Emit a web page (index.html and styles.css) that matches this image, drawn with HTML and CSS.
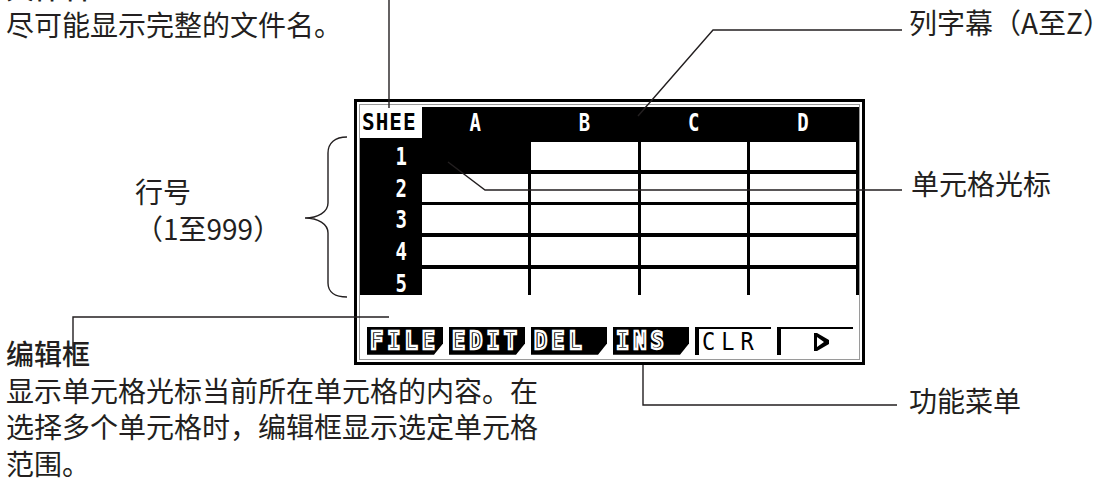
FILE: index.html
```html
<!DOCTYPE html>
<html lang="zh-CN">
<head>
  <meta charset="UTF-8">
  <title>电子表格画面</title>
  <link rel="stylesheet" href="styles.css">
</head>
<body>

<div class="figure">
  <div class="screen">
    <div class="lcd">
      <div class="sheet">
        <div class="corner"><span class="px">SHEE</span></div>
        <div class="col-head"><span class="px">A</span></div>
        <div class="col-head"><span class="px">B</span></div>
        <div class="col-head"><span class="px">C</span></div>
        <div class="col-head"><span class="px">D</span></div>

        <div class="row-no"><span class="px">1</span></div>
        <div class="cell cursor"></div>
        <div class="cell"></div>
        <div class="cell"></div>
        <div class="cell"></div>

        <div class="row-no"><span class="px">2</span></div>
        <div class="cell"></div>
        <div class="cell"></div>
        <div class="cell"></div>
        <div class="cell"></div>

        <div class="row-no"><span class="px">3</span></div>
        <div class="cell"></div>
        <div class="cell"></div>
        <div class="cell"></div>
        <div class="cell"></div>

        <div class="row-no"><span class="px">4</span></div>
        <div class="cell"></div>
        <div class="cell"></div>
        <div class="cell"></div>
        <div class="cell"></div>

        <div class="row-no"><span class="px">5</span></div>
        <div class="cell"></div>
        <div class="cell"></div>
        <div class="cell"></div>
        <div class="cell"></div>
      </div>

      <!-- 编辑框 -->
      <div class="edit-line"></div>

      <div class="fkeys">
        <span class="fkey"><span class="px">FILE</span></span>
        <span class="fkey"><span class="px">EDIT</span></span>
        <span class="fkey"><span class="px">DEL</span></span>
        <span class="fkey"><span class="px">INS</span></span>
        <span class="fkey open"><span class="px">CLR</span></span>
        <span class="fkey open next">
          <svg width="15" height="18" viewBox="0 0 15 18">
            <path d="M0 0 H3 L15 7 V11 L3 18 H0 Z M3 4 V14 L10 9 Z" fill="#000" fill-rule="evenodd" />
          </svg>
        </span>
      </div>
    </div>
  </div>

  <div class="note note-file">
    <div class="note-title">文件名</div>
    尽可能显示完整的文件名。
  </div>

  <div class="note note-rows">
    行号<br>
    （1至999）
  </div>

  <div class="note note-edit">
    <div class="note-title">编辑框</div>
    显示单元格光标当前所在单元格的内容。在<br>
    选择多个单元格时，编辑框显示选定单元格<br>
    范围。
  </div>

  <div class="note note-cols">列字幕（A至Z<span class="halt">）</span></div>
  <div class="note note-cursor">单元格光标</div>
  <div class="note note-menu">功能菜单</div>

  <svg class="leaders" width="1101" height="497" viewBox="0 0 1101 497">
    <path d="M389 0 V108" />
    <path d="M638 116 L713 30 H902" />
    <path d="M448 162 L485 190 H902" />
    <path d="M643 365 V405 H897" />
    <path d="M389 317 H73 V350" />
    <path d="M347 137 C335 137 328 143 328 153 L328 203 C328 212 318 218 305 218 C318 218 328 224 328 233 L328 283 C328 292 335 297 347 297" />
  </svg>
</div>

</body>
</html>
```

FILE: styles.css
```css
body {
  margin: 0;
  background-color: #fff;
  color: #231f20;
  font-family: "Noto Sans CJK SC", "Noto Sans", sans-serif;
}
.figure {
  position: relative;
  width: 1101px;
  height: 497px;
  overflow: hidden;
}

/* calculator screen */
.screen {
  width: 511px;
  box-sizing: border-box;
  margin: 99px 0 0 354px;
  border: 3px solid #000;
  padding: 2px;
}
.lcd {
  border: 1px solid #9a9a9a;
  padding-top: 2px;
}
.sheet {
  display: grid;
  grid-template-columns: 59px repeat(4, 1fr);
  grid-template-rows: 31px repeat(4, 28px) 26px;
  column-gap: 3px;
  row-gap: 3.75px;
  background-color: #000;
  padding-right: 3px;
  font-family: "DejaVu Sans Mono", monospace;
  font-weight: bold;
}
.px {
  display: inline-block;
  transform: scaleY(1.3);
}
.corner {
  background-color: #fff;
  color: #000;
  margin-right: -3px;
  font-size: 21px;
  letter-spacing: 1px;
  line-height: 31px;
  padding-left: 2px;
}
.corner .px {
  transform: scaleY(1.1);
}
.col-head {
  color: #fff;
  text-align: center;
  font-size: 19px;
  line-height: 31px;
}
.row-no {
  color: #fff;
  text-align: right;
  padding-right: 12px;
  font-size: 19px;
  line-height: 28px;
}
.cell {
  background-color: #fff;
}
.cell.cursor {
  background-color: #000;
}
.edit-line {
  height: 32px;
}

/* function menu */
.fkeys {
  display: flex;
  gap: 6px;
  height: 28px;
  padding: 0 0 4px 7px;
  font-family: "DejaVu Sans Mono", monospace;
}
.fkey {
  width: 76px;
  height: 28px;
  box-sizing: border-box;
  background-color: #000;
  clip-path: polygon(0 0, 100% 0, 100% 60%, calc(100% - 9px) 100%, 0 100%);
  color: #000;
  -webkit-text-stroke: 2px #fff;
  font-size: 22px;
  font-weight: bold;
  letter-spacing: 4px;
  line-height: 28px;
  padding-left: 3px;
  white-space: nowrap;
}
.fkey .px {
  transform: scaleY(1.15);
}
.fkey.open {
  background-color: #fff;
  border-left: 4px solid #000;
  border-top: 2px solid #000;
  clip-path: none;
  -webkit-text-stroke: 0;
  font-weight: normal;
  letter-spacing: 6px;
  line-height: 26px;
  padding-left: 3px;
}
.fkey.next {
  display: flex;
  align-items: center;
  padding-left: 33px;
}

/* callouts */
.note {
  position: absolute;
  font-size: 28px;
  line-height: 36.5px;
  white-space: nowrap;
}
.note-title {
  font-weight: 500;
}
.halt {
  font-feature-settings: "halt";
}
.note-file {
  left: 6px;
  top: -31px;
}
.note-rows {
  left: 135px;
  top: 173px;
}
.note-edit {
  left: 6px;
  top: 335px;
}
.note-cols {
  left: 909px;
  top: 4px;
}
.note-cursor {
  left: 911px;
  top: 165px;
}
.note-menu {
  left: 909px;
  top: 382px;
}
.leaders {
  position: absolute;
  left: 0;
  top: 0;
  pointer-events: none;
}
.leaders path {
  fill: none;
  stroke: #231f20;
  stroke-width: 1.4;
}
```
